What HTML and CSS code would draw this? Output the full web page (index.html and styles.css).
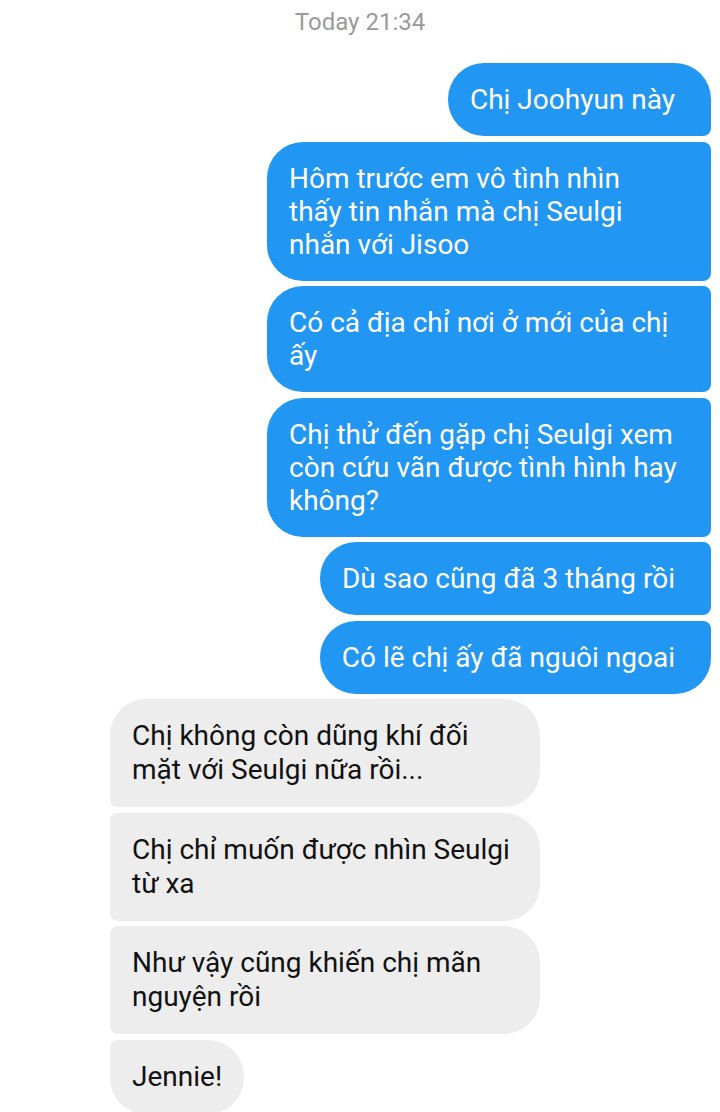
FILE: index.html
```html
<!DOCTYPE html>
<html lang="vi">
<head>
  <meta charset="UTF-8" />
  <meta name="viewport" content="width=device-width, initial-scale=1.0" />
  <title>Tin nhắn</title>
  <link rel="stylesheet" href="styles.css">
</head>
<body>
  <div class="thread">
    <div class="time">Today 21:34</div>

    <div class="group sent">
      <div class="bubble">Chị Joohyun này</div>
      <div class="bubble wide">Hôm trước em vô tình nhìn<br>thấy tin nhắn mà chị Seulgi<br>nhắn với Jisoo</div>
      <div class="bubble wide">Có cả địa chỉ nơi ở mới của chị<br>ấy</div>
      <div class="bubble wide">Chị thử đến gặp chị Seulgi xem<br>còn cứu vãn được tình hình hay<br>không?</div>
      <div class="bubble">Dù sao cũng đã 3 tháng rồi</div>
      <div class="bubble">Có lẽ chị ấy đã nguôi ngoai</div>
    </div>

    <div class="group received">
      <div class="bubble wide">Chị không còn dũng khí đối<br>mặt với Seulgi nữa rồi...</div>
      <div class="bubble wide">Chị chỉ muốn được nhìn Seulgi<br>từ xa</div>
      <div class="bubble wide">Như vậy cũng khiến chị mãn<br>nguyện rồi</div>
      <div class="bubble">Jennie!</div>
    </div>
  </div>
</body>
</html>
```

FILE: styles.css
```css
body {
  font-family: Roboto, 'Noto Sans', sans-serif;
  background: #fff;
  margin: 0;
}
.thread {
  padding: 7px 9px 0 110px;
}
.time {
  text-align: center;
  color: #9a9a9a;
  font-size: 24px;
  line-height: 30px;
  margin: 0 -9px 26px -110px;
}
.group {
  display: flex;
  flex-direction: column;
  gap: 5.5px;
  margin-bottom: 5.5px;
}
.bubble {
  font-size: 28px;
  line-height: 33px;
  padding: 20px 22px;
  box-sizing: border-box;
  white-space: nowrap;
}
.sent {
  align-items: flex-end;
}
.sent .bubble {
  background: #2196f3;
  color: #fff;
  padding-right: 36px;
  border-radius: 36px 8px 8px 36px;
}
.sent .bubble.wide {
  width: 444px;
}
.sent .bubble:first-child {
  border-top-right-radius: 36px;
}
.sent .bubble:last-child {
  border-bottom-right-radius: 36px;
}
.received {
  align-items: flex-start;
}
.received .bubble {
  background: #ededed;
  color: #111;
  line-height: 34px;
  border-radius: 8px 36px 36px 8px;
}
.received .bubble.wide {
  width: 430px;
}
.received .bubble:first-child {
  border-top-left-radius: 36px;
}
.received .bubble:last-child {
  border-bottom-left-radius: 36px;
}
```
